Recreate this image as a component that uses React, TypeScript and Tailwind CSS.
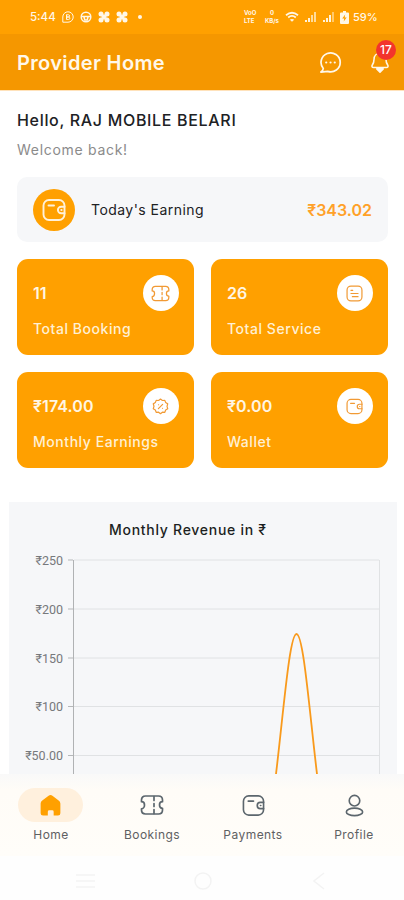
import type { ReactNode } from "react";

type IconProps = { className?: string; strokeWidth?: number };

function Svg({ className, strokeWidth = 1.5, children }: IconProps & { children: ReactNode }) {
  return (
    <svg
      viewBox="0 0 24 24"
      fill="none"
      stroke="currentColor"
      strokeWidth={strokeWidth}
      strokeLinecap="round"
      strokeLinejoin="round"
      className={className}
    >
      {children}
    </svg>
  );
}

const WalletIcon = (p: IconProps) => (
  <Svg {...p}>
    <rect x="1.500" y="2" width="21" height="20" rx="5.500" />
    <path d="M6.500 7.500h5.500" />
    <path d="M22.500 8.800h-3.400a3.200 3.200 0 0 0 0 6.400h3.400" />
    <path d="M19.300 12h.3" />
  </Svg>
);

const TicketIcon = (p: IconProps) => (
  <Svg {...p}>
    <path d="M5.500 3h13C21 3 22.500 4.500 22.500 7v1.700c-1.800 0-3 1.500-3 3.300s1.200 3.300 3 3.300V17c0 2.500-1.500 4-4 4h-13c-2.500 0-4-1.500-4-4v-1.200c1.800 0 3-1.900 3-3.800s-1.200-3.300-3-3.300V7c0-2.500 1.500-4 4-4Z" />
    <path d="M14 3.500v4M14 10.500v3M14 16.500v4" />
  </Svg>
);

const DocumentIcon = (p: IconProps) => (
  <Svg {...p}>
    <rect x="1.500" y="1.500" width="21" height="21" rx="5.500" />
    <path d="M7 7.500h2.500M7 12h10M9 16.500h8" />
  </Svg>
);

const DiscountIcon = (p: IconProps) => (
  <Svg {...p}>
    <path d="m12 1.500 2.700 2 3.400-.2 1.200 3.200 2.900 1.800-1 3.500 1 3.300-2.900 1.900-1.200 3.200-3.400-.2-2.700 2.200-2.700-2.200-3.400.2-1.200-3.200-2.900-1.900 1-3.400-1-3.400 2.900-1.800 1.200-3.200 3.400.2Z" />
    <path d="m9 15 6-6M9.200 9.500h.1M14.800 14.500h.1" />
  </Svg>
);

const ProfileIcon = (p: IconProps) => (
  <Svg {...p}>
    <circle cx="12" cy="7" r="5.500" />
    <ellipse cx="12" cy="18.700" rx="8.500" ry="3.900" />
  </Svg>
);

const HomeIcon = ({ className }: IconProps) => (
  <svg viewBox="0 0 24 24" fill="currentColor" className={className}>
    <path d="M10 1.700a3.300 3.300 0 0 1 4 0l6.500 5.100A4 4 0 0 1 22.300 10V20a2.500 2.500 0 0 1-2.500 2.500h-4.500v-4a1.500 1.500 0 0 0-1.500-1.500h-3.100a1.500 1.500 0 0 0-1.500 1.500v4H4.200A2.500 2.500 0 0 1 1.700 20V10a4 4 0 0 1 1.700-3.200Z" />
  </svg>
);

const ChatIcon = (p: IconProps) => (
  <Svg {...p}>
    <path d="M4.500 18.300A10 9.900 0 1 1 9 21.300L2 22Q4.300 20.500 4.500 18.300Z" />
    <path d="M7.500 12h.1M12 12h.1M16.400 12h.1" strokeWidth="2.200" />
  </Svg>
);

const BellIcon = (p: IconProps) => (
  <Svg {...p}>
    <path d="M12 2.500c-4 0-6.500 3-6.500 6.500 0 3.500-.6 4.500-2 6.500-.8 1.500 0 2.500 1.500 2.500h14c1.500 0 2.300-1 1.500-2.500-1.400-2-2-3-2-6.500 0-3.500-2.500-6.500-6.500-6.500Z" />
    <path d="M8.500 19.500h7L12 23Z" fill="currentColor" />
  </Svg>
);

function Pinwheel() {
  return (
    <svg viewBox="0 0 12 12" className="h-3 w-3" fill="#fff7e8">
      <circle cx="3" cy="3" r="2.500" />
      <circle cx="9" cy="3" r="2.500" />
      <circle cx="3" cy="9" r="2.500" />
      <circle cx="9" cy="9" r="2.500" />
      <path d="m3 5 2-2 4 4-2 2ZM7 3l2 2-4 4-2-2Z" />
    </svg>
  );
}

function Signal({ dim }: { dim?: boolean }) {
  return (
    <svg viewBox="0 0 13 12" className="h-3 w-[13px]" fill="#fff3dc">
      <path d="M1 9h2v2H1zM4 7h2v4H4z" />
      <path d="M7 4h2v7H7z" opacity={dim ? 0.7 : 1} />
      <path d="M10 1h2v10h-2z" opacity={dim ? 0.7 : 0.5} />
    </svg>
  );
}

function StatusBar() {
  return (
    <div className="flex h-[34px] shrink-0 items-center bg-[#ffa000] pl-[30px] pr-[28px] text-[#fff7e8]">
      <span className="w-8 pt-[2px] text-[11.500px] font-medium leading-none">5:44</span>
      <div className="flex items-center gap-[6px]">
        <svg viewBox="0 0 12 12" className="h-3 w-3" fill="none" stroke="currentColor">
          <path d="M.8 11.200V6A5.200 5.200 0 1 1 6 11.200Z" />
          <path d="M4.500 3.500v5M4.500 3.800h2a1.100 1.100 0 0 1 0 2.200h-2 2.200a1.200 1.200 0 0 1 0 2.400H4.500" />
        </svg>
        <svg viewBox="0 0 12 12" className="h-3 w-3" fill="none" stroke="currentColor" strokeWidth="1.500">
          <circle cx="6" cy="6" r="4.800" />
          <path d="M1.500 5.500h9M4 6l.8 3h2.400L8 6" />
        </svg>
        <Pinwheel />
        <Pinwheel />
      </div>
      <span className="ml-[10px] h-1 w-1 rounded-full bg-[#fff7e8]" />
      <div className="ml-auto flex items-center">
        <div className="mr-[4px] flex w-4 flex-col text-[6px] font-bold leading-[8px]">
          <span>VoO</span>
          <span>LTE</span>
        </div>
        <div className="mr-[5px] flex w-4 flex-col items-center text-[6px] font-bold leading-[8px]">
          <span>0</span>
          <span>KB/s</span>
        </div>
        <svg viewBox="0 0 14 12" className="mr-[5px] h-3 w-[14px]" fill="none" stroke="currentColor" strokeWidth="1.800">
          <path d="M1 4.200Q7-.8 13 4.200M3.200 6.500Q7 3.300 10.800 6.500" />
          <path d="M5.500 8.700h3L7 10.300Z" fill="currentColor" strokeWidth="1" />
        </svg>
        <div className="mr-[5px]"><Signal dim /></div>
        <div className="mr-[5px]"><Signal /></div>
        <svg viewBox="0 0 9 13" className="mr-[4px] h-[13px] w-[9px]">
          <path d="M3 0h3v1.500h2A1 1 0 0 1 9 2.500V12a1 1 0 0 1-1 1H1a1 1 0 0 1-1-1V2.500a1 1 0 0 1 1-1h2Z" fill="#fff7e8" />
          <path d="m5.200 3.500-3 4h2l-.5 3 3-4h-2Z" fill="#ffa000" />
        </svg>
        <span className="w-[23px] whitespace-nowrap pt-px text-[11px] font-medium leading-none">59%</span>
      </div>
    </div>
  );
}

function Header() {
  return (
    <header className="flex h-14 shrink-0 items-center bg-[#f59700] pl-[17px] pr-[13px] text-[#fff8ea]">
      <h1 className="whitespace-nowrap pt-[2px] text-[20px] font-semibold tracking-[0.350px]">Provider Home</h1>
      <ChatIcon className="ml-auto h-[23px] w-[23px]" strokeWidth={1.800} />
      <div className="relative ml-[27px] h-[22px] w-[22px]">
        <BellIcon className="h-[22px] w-[22px]" strokeWidth={1.700} />
        <span className="absolute -top-[11px] left-[7px] flex h-5 w-5 items-center justify-center rounded-full bg-[#f3342c] text-[12px] font-medium text-white">
          17
        </span>
      </div>
    </header>
  );
}

type Stat = { value: string; label: string; icon: ReactNode };

const stats: Stat[] = [
  { value: "11", label: "Total Booking", icon: <TicketIcon className="h-[19px] w-[19px]" strokeWidth={1.600} /> },
  { value: "26", label: "Total Service", icon: <DocumentIcon className="h-[17px] w-[17px]" strokeWidth={1.700} /> },
  { value: "₹174.00", label: "Monthly Earnings", icon: <DiscountIcon className="h-[17px] w-[17px]" strokeWidth={1.700} /> },
  { value: "₹0.00", label: "Wallet", icon: <WalletIcon className="h-[17px] w-[17px]" strokeWidth={1.700} /> },
];

function StatCard({ value, label, icon }: Stat) {
  return (
    <div className="h-24 rounded-[11px] bg-[#ffa000] pl-4 pr-[15.500px] pt-4 text-[#fff6e4]">
      <div className="flex h-9 items-center justify-between">
        <span className="text-[16px] font-semibold tracking-[0.100px]">{value}</span>
        <span className="flex h-9 w-9 items-center justify-center rounded-full bg-white text-[#f19a35]">{icon}</span>
      </div>
      <p className="mt-[8px] whitespace-nowrap text-[14px] font-medium leading-5 tracking-[0.550px] text-[#fff0d4]">{label}</p>
    </div>
  );
}

const ticks = [
  { label: "₹250", y: 58 },
  { label: "₹200", y: 107 },
  { label: "₹150", y: 156 },
  { label: "₹100", y: 204.5 },
  { label: "₹50.00", y: 253.5 },
];

function RevenueChart() {
  return (
    <section className="ml-2 mr-[6px] mt-[34px] h-[272px] bg-[#f6f7f9]">
      <svg viewBox="0 0 388 272" className="block h-[272px] w-[388px]">
        <text x="100" y="32.500" fontSize="14" fontWeight="500" fill="#1c1f22" textLength="157">
          Monthly Revenue in ₹
        </text>
        {ticks.map((t) => (
          <g key={t.label}>
            <path d={`M65 ${t.y}H370`} stroke="#e0e2e4" />
            <path d={`M59 ${t.y}h5`} stroke="#b5b7b9" />
            <text x="54" y={t.y + 4.5} textAnchor="end" fontSize="12.500" fill="#77797c" className="font-[Roboto]">
              {t.label}
            </text>
          </g>
        ))}
        <path d="M64.500 58V272" stroke="#b0b2b4" />
        <path d="M370.500 58V272" stroke="#e0e2e4" />
        <path d="M267 272C274.500 210 280.500 132 287.500 132S300.500 210 308 272" fill="none" stroke="#f99a1c" strokeWidth="1.800" />
      </svg>
    </section>
  );
}

const tabs = [
  { label: "Home", active: true, icon: <HomeIcon className="h-[23px] w-[23px]" /> },
  { label: "Bookings", active: false, icon: <TicketIcon className="h-6 w-6" strokeWidth={1.700} /> },
  { label: "Payments", active: false, icon: <WalletIcon className="h-[23px] w-[23px]" strokeWidth={1.700} /> },
  { label: "Profile", active: false, icon: <ProfileIcon className="h-[23px] w-[23px]" strokeWidth={1.700} /> },
];

function BottomNav() {
  return (
    <nav className="grid h-[82px] shrink-0 grid-cols-4 bg-gradient-to-b from-[#f9f9f9] via-[#fffcf7] via-20% to-[#fffdf9] pt-[14px]">
      {tabs.map((tab) => (
        <div key={tab.label} className="flex flex-col items-center">
          <span
            className={`flex h-[34px] w-[65px] items-center justify-center rounded-full ${
              tab.active ? "bg-[#fff0dd] text-[#ffa000]" : "pl-px text-[#5c666d]"
            }`}
          >
            {tab.icon}
          </span>
          <span className="mt-[5px] pl-px text-[12px] leading-4 tracking-[0.450px] text-[#5e6062]">{tab.label}</span>
        </div>
      ))}
    </nav>
  );
}

function SystemBar() {
  return (
    <div className="flex h-11 shrink-0 items-center bg-[#fefefe] pl-[76px] pt-[6px] text-[#f3f3f3]">
      <svg viewBox="0 0 19 16" className="h-4 w-[19px]" stroke="currentColor" strokeWidth="1.500">
        <path d="M0 2h19M0 8h19M0 14h19" />
      </svg>
      <svg viewBox="0 0 18 18" className="ml-[99px] h-[18px] w-[18px]" fill="none" stroke="currentColor" strokeWidth="1.500">
        <circle cx="9" cy="9" r="8" />
      </svg>
      <svg viewBox="0 0 12 18" className="ml-[101px] h-[18px] w-3" fill="none" stroke="currentColor" strokeWidth="1.500">
        <path d="M11 1 1 9l10 8" />
      </svg>
    </div>
  );
}

export default function App() {
  return (
    <div className="flex h-[900px] w-[404px] flex-col overflow-hidden bg-white font-[Inter,'Noto_Sans',sans-serif]">
      <StatusBar />
      <Header />
      <main className="h-[684px] shrink-0 overflow-hidden border-t border-[#ffe2bb] px-px">
        <div className="px-4 pt-[17px]">
          <h2 className="whitespace-nowrap text-[16px] font-medium leading-6 tracking-[0.680px] text-[#202124]">Hello, RAJ MOBILE BELARI</h2>
          <p className="mt-[8px] text-[14px] leading-5 tracking-[0.700px] text-[#8b8b8b]">Welcome back!</p>
          <div className="mt-[17px] flex h-[65px] w-[371px] items-center rounded-[10px] bg-[#f6f7f9] px-4">
            <span className="flex h-[42px] w-[42px] items-center justify-center rounded-full bg-[#ffa000] text-[#fff1d9]">
              <WalletIcon className="h-[24px] w-[24px]" strokeWidth={1.900} />
            </span>
            <span className="ml-[16px] text-[14px] tracking-[0.450px] text-[#202124]">Today's Earning</span>
            <span className="ml-auto text-[16px] font-semibold text-[#ffa129]">₹343.02</span>
          </div>
          <div className="mt-[17px] grid w-[371px] grid-cols-2 gap-[17px]">
            {stats.map((s) => (
              <StatCard key={s.label} {...s} />
            ))}
          </div>
        </div>
        <RevenueChart />
      </main>
      <BottomNav />
      <SystemBar />
    </div>
  );
}
